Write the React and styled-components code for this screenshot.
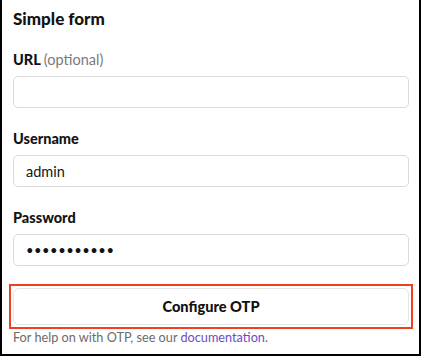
import React from 'react'
import styled, { createGlobalStyle } from 'styled-components'

const Global = createGlobalStyle`
  html, body {
    margin: 0;
    padding: 0;
    background: #fff;
  }
  body {
    font-family: Lato, "Noto Sans", sans-serif;
    color: #141414;
  }
  * { box-sizing: border-box; }
`

const Panel = styled.div`
  width: 421px;
  height: 356px;
  border: 2px solid #000;
  border-top: none;
  padding: 9px 10px 0 11px;
  background: #fff;
  display: flex;
  flex-direction: column;
`

const Title = styled.h3`
  margin: 0 0 21px;
  font-size: 17px;
  line-height: 20px;
  font-weight: 900;
`

const Field = styled.div`
  display: flex;
  flex-direction: column;
  gap: 6px;
  margin-bottom: 21px;
`

const Label = styled.label`
  font-size: 14.5px;
  line-height: 20px;
  font-weight: 900;
  span {
    font-weight: 400;
    color: #7a7a7a;
  }
`

const Input = styled.input`
  width: 100%;
  height: 32px;
  border: 1px solid #dadada;
  border-radius: 5px;
  padding: 0 12px;
  font-family: Lato, "Noto Sans", sans-serif;
  font-size: 14.5px;
  color: #141414;
  outline: none;
  background: #fff;
  &[type='password'] {
    font-size: 13px;
    letter-spacing: 0.5px;
  }
`

const Highlight = styled.div`
  margin: -3px -4px 0;
  padding: 2px;
  border: 2px solid #f0411f;
`

const Button = styled.button`
  display: block;
  width: 100%;
  height: 37px;
  border: 1px solid #e4e4e4;
  border-radius: 6px;
  background: #fff;
  font-family: Lato, "Noto Sans", sans-serif;
  font-size: 14.6px;
  font-weight: 900;
  color: #111;
  cursor: pointer;
`

const Help = styled.p`
  margin: 1px 0 0;
  font-size: 12.7px;
  line-height: 14px;
  color: #6b6b6b;
  a {
    color: #6a4cc2;
    text-decoration: none;
  }
`

export default function App() {
  return (
    <>
      <Global />
      <Panel>
        <Title>Simple form</Title>
        <Field>
          <Label>URL <span>(optional)</span></Label>
          <Input type="text" defaultValue="" />
        </Field>
        <Field>
          <Label>Username</Label>
          <Input type="text" defaultValue="admin" />
        </Field>
        <Field>
          <Label>Password</Label>
          <Input type="password" defaultValue="adminadmin1" />
        </Field>
        <Highlight>
          <Button>Configure OTP</Button>
        </Highlight>
        <Help>
          For help on with OTP, see our <a href="#docs">documentation</a>.
        </Help>
      </Panel>
    </>
  )
}
